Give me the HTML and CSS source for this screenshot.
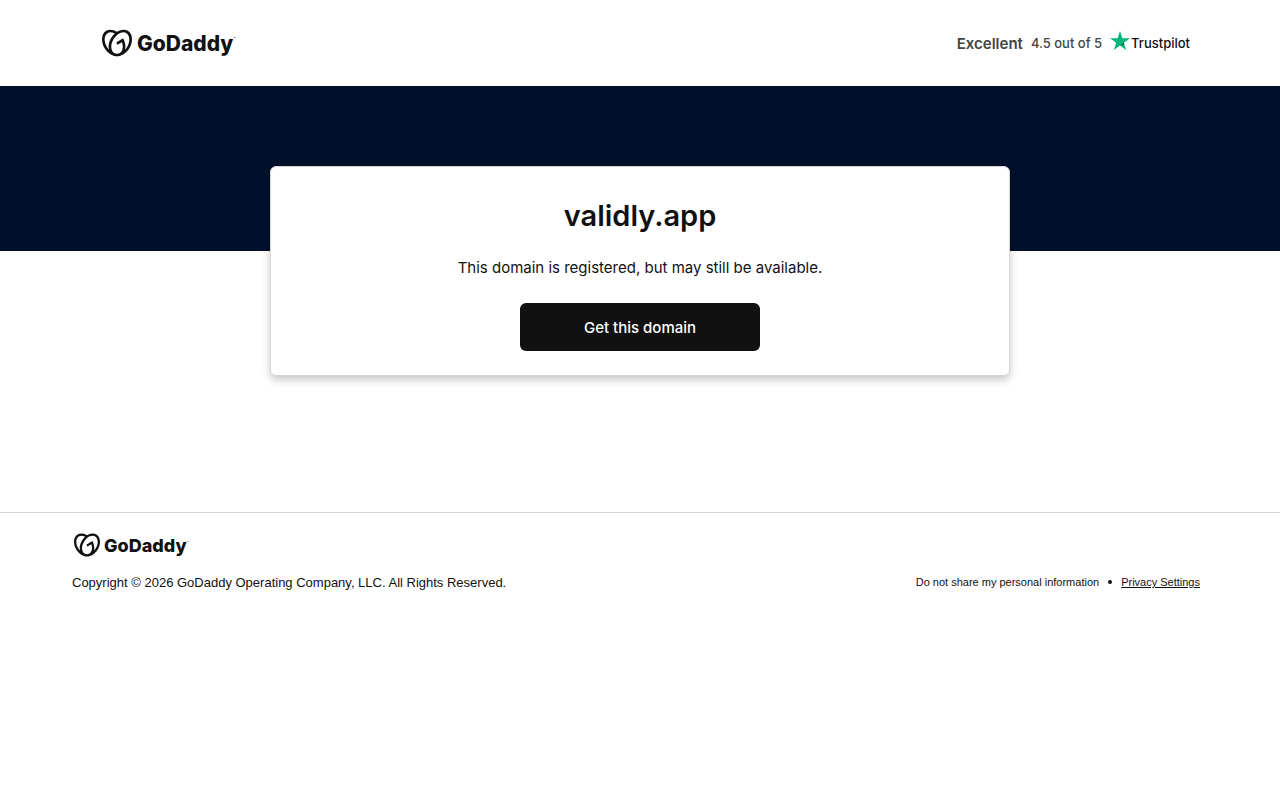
FILE: index.html
```html
<!DOCTYPE html>
<html lang="en">
<head>
<meta charset="utf-8">
<meta name="viewport" content="width=device-width, initial-scale=1">
<title>validly.app</title>
<link rel="stylesheet" href="styles.css">
</head>
<body>
<svg class="sprite" aria-hidden="true">
  <symbol id="heart" viewBox="0 1 24 22">
    <path d="M20.702 2.29c-2.494-1.554-5.778-1.187-8.706.654C9.076 1.104 5.79.736 3.3 2.29c-3.941 2.463-4.42 8.806-1.07 14.167 2.47 3.954 6.333 6.269 9.77 6.226 3.439.043 7.301-2.273 9.771-6.226 3.347-5.361 2.872-11.704-1.069-14.167zM4.042 15.328a12.838 12.838 0 01-1.546-3.541 10.12 10.12 0 01-.336-3.338c.15-1.98.956-3.524 2.27-4.345 1.315-.822 3.052-.87 4.903-.137.281.113.556.24.825.382A15.11 15.11 0 007.5 7.54c-2.035 3.255-2.655 6.878-1.945 9.765a13.247 13.247 0 01-1.514-1.98zm17.465-3.541a12.866 12.866 0 01-1.547 3.54 13.25 13.25 0 01-1.513 1.984c.635-2.589.203-5.76-1.353-8.734a.39.39 0 00-.563-.153l-4.852 3.032a.397.397 0 00-.126.546l.712 1.139a.395.395 0 00.547.126l3.145-1.965c.101.306.203.606.28.916.296 1.086.41 2.214.335 3.337-.15 1.982-.956 3.525-2.27 4.347a4.437 4.437 0 01-2.25.65h-.101a4.432 4.432 0 01-2.25-.65c-1.314-.822-2.121-2.365-2.27-4.347-.074-1.123.039-2.251.335-3.337a13.212 13.212 0 014.05-6.482 10.148 10.148 0 012.849-1.765c1.845-.733 3.586-.685 4.9.137 1.316.822 2.122 2.365 2.271 4.345a10.146 10.146 0 01-.33 3.334z"/>
  </symbol>
</svg>
<header class="header">
  <div class="logo">
    <svg class="logo-mark" aria-hidden="true"><use href="#heart"/></svg>
    <span class="logo-word">GoDaddy</span><span class="logo-tm">™</span>
  </div>
  <div class="rating">
    <strong class="rating-label">Excellent</strong>
    <span class="rating-score">4.5 out of 5</span>
    <span class="trustpilot">
      <svg class="star" viewBox="0 0 20 19" aria-hidden="true"><path fill="#00b67a" d="M20 7.25h-7.64L10 0 7.64 7.25H0l6.18 4.48L3.82 19 10 14.52 16.18 19l-2.36-7.27z"/><path fill="#005128" d="M14.35 13.37l-.53-1.64L10 14.52z"/></svg>
      <span class="trustpilot-word">Trustpilot</span>
    </span>
  </div>
</header>
<main class="main">
  <section class="card">
    <h1 class="domain">validly.app</h1>
    <p class="message">This domain is registered, but may still be available.</p>
    <button class="cta" type="button">Get this domain</button>
  </section>
</main>
<footer class="footer">
  <div class="logo logo-small">
    <svg class="logo-mark" aria-hidden="true"><use href="#heart"/></svg>
    <span class="logo-word">GoDaddy</span><span class="logo-tm">™</span>
  </div>
  <div class="legal">
    <p class="copyright">Copyright © 2026 GoDaddy Operating Company, LLC. All Rights Reserved.</p>
    <div class="privacy">
      <span>Do not share my personal information</span>
      <span class="dot" aria-hidden="true"></span>
      <a class="privacy-link" href="#privacy">Privacy Settings</a>
    </div>
  </div>
</footer>
</body>
</html>
```
FILE: styles.css
```css
* { box-sizing: border-box; }
body {
  margin: 0;
  background: #fff;
  color: #111;
  font-family: Inter, sans-serif;
  font-size: 15px;
}
h1, p { margin: 0; }
.sprite { position: absolute; width: 0; height: 0; }

.header {
  display: flex;
  justify-content: space-between;
  align-items: center;
  height: 86px;
  padding: 0 90px 0 102px;
}
.logo { display: flex; align-items: center; }
.logo-mark { width: 30px; height: 28px; fill: #111; }
.logo-word {
  margin-left: 5px;
  padding-top: 2px;
  font-size: 21px;
  font-weight: 800;
  line-height: 26px;
}
.logo-tm { align-self: flex-start; font-size: 4px; line-height: 20px; }

.rating { display: flex; align-items: center; gap: 8px; color: #444; }
.rating-label { font-size: 15px; font-weight: 600; }
.rating-score { font-size: 13px; font-weight: 500; }
.trustpilot { display: flex; align-items: flex-start; gap: 1px; padding-bottom: 5px; }
.star { width: 20px; height: 19px; }
.trustpilot-word {
  padding-top: 4px;
  font-size: 13px;
  font-weight: 500;
  line-height: 16px;
  color: #111;
}

.main {
  padding: 80px 20px 136px;
  background: linear-gradient(#00112b, #00112b) top / 100% 165px no-repeat;
}
.card {
  display: flex;
  flex-direction: column;
  align-items: center;
  max-width: 740px;
  margin: 0 auto;
  padding: 25px 24px 24px;
  border: 1px solid #d6d6d6;
  border-radius: 6px;
  background: #fff;
  box-shadow: 0 4px 8px rgba(0, 0, 0, 0.22);
  text-align: center;
}
.domain { font-size: 29px; font-weight: 600; line-height: 48px; }
.message { margin-top: 16px; font-size: 15px; line-height: 24px; }
.cta {
  width: 240px;
  height: 48px;
  margin-top: 23px;
  padding: 2px 8px 0;
  border: 0;
  border-radius: 6px;
  background: #111;
  color: #fff;
  font: 500 15px/24px Inter, sans-serif;
}

.footer { padding: 20px 80px 0 72px; border-top: 1px solid #d6d6d6; }
.logo-small { padding-left: 2px; }
.logo-small .logo-mark { width: 26px; height: 24px; }
.logo-small .logo-word { margin-left: 4px; font-size: 18px; line-height: 22px; }
.logo-small .logo-tm { font-size: 3px; }
.legal {
  display: flex;
  justify-content: space-between;
  align-items: flex-start;
  margin-top: 16px;
  font-family: "Liberation Sans", Arial, sans-serif;
}
.copyright { font-size: 13px; line-height: 20px; }
.privacy { display: flex; align-items: center; gap: 9px; font-size: 11px; line-height: 18px; }
.dot { width: 4px; height: 4px; border-radius: 50%; background: #111; }
.privacy-link { color: #111; }
```
